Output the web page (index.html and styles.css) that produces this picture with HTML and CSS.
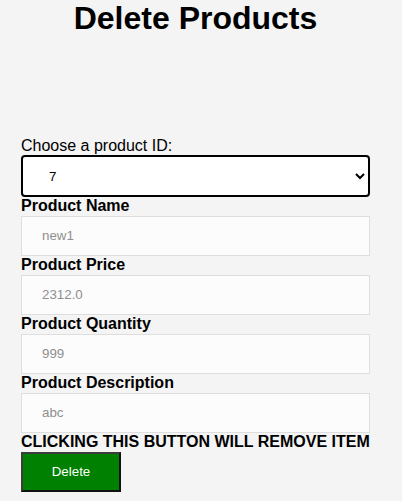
FILE: index.html
```html
<!DOCTYPE html>
<html>
<head>
<meta charset="utf-8">
<link rel="stylesheet" href="styles.css">
</head>
<body>
<h1 class="title">Delete Products</h1>
<form class="form">
  <label class="choose" for="pid">Choose a product ID:</label>
  <select id="pid" class="select">
    <option>7</option>
  </select>
  <div class="field-label">Product Name</div>
  <input class="field" type="text" placeholder="new1" readonly>
  <div class="field-label">Product Price</div>
  <input class="field" type="text" placeholder="2312.0" readonly>
  <div class="field-label">Product Quantity</div>
  <input class="field" type="text" placeholder="999" readonly>
  <div class="field-label">Product Description</div>
  <input class="field" type="text" placeholder="abc" readonly>
  <div class="field-label">CLICKING THIS BUTTON WILL REMOVE ITEM</div>
  <button type="button" class="btn">Delete</button>
</form>
</body>
</html>
```
FILE: styles.css
```css
html, body {
  margin: 0;
  padding: 0;
  background: #f4f4f4;
  font-family: "Liberation Sans", Arial, sans-serif;
  color: #000;
}
.title {
  margin: 0;
  padding-right: 11px;
  text-align: center;
  font-size: 32px;
  font-weight: bold;
  line-height: 36.8px;
}
.form {
  display: flex;
  flex-direction: column;
  align-items: flex-start;
  width: 349px;
  margin: 100px 0 0 21px;
}
.choose {
  display: block;
  font-size: 16px;
  line-height: 18.4px;
}
.select {
  box-sizing: border-box;
  width: 349px;
  height: 42px;
  margin: 0;
  padding: 0 0 0 22px;
  border: 2px solid #000;
  border-radius: 4px;
  background-color: #fff;
  font-family: "Liberation Sans", Arial, sans-serif;
  font-size: 13.333px;
  color: #000;
}
.field-label {
  font-size: 16px;
  font-weight: bold;
  line-height: 18.4px;
}
.field {
  box-sizing: border-box;
  width: 349px;
  height: 40.6px;
  margin: 0;
  padding: 0 20px;
  border: 1px solid #dedede;
  background: #fcfcfc;
  font-family: "Liberation Sans", Arial, sans-serif;
  font-size: 13.333px;
  color: #8f8f8f;
  outline: none;
}
.field::placeholder {
  color: #8f8f8f;
  opacity: 1;
}
.btn {
  box-sizing: border-box;
  width: 100px;
  height: 40px;
  margin: 0;
  padding: 0;
  background: #008000;
  border-width: 2px;
  border-style: solid;
  border-color: #3c3c3c #111 #111 #3c3c3c;
  color: #fff;
  font-family: "Liberation Sans", Arial, sans-serif;
  font-size: 13.333px;
}
```
